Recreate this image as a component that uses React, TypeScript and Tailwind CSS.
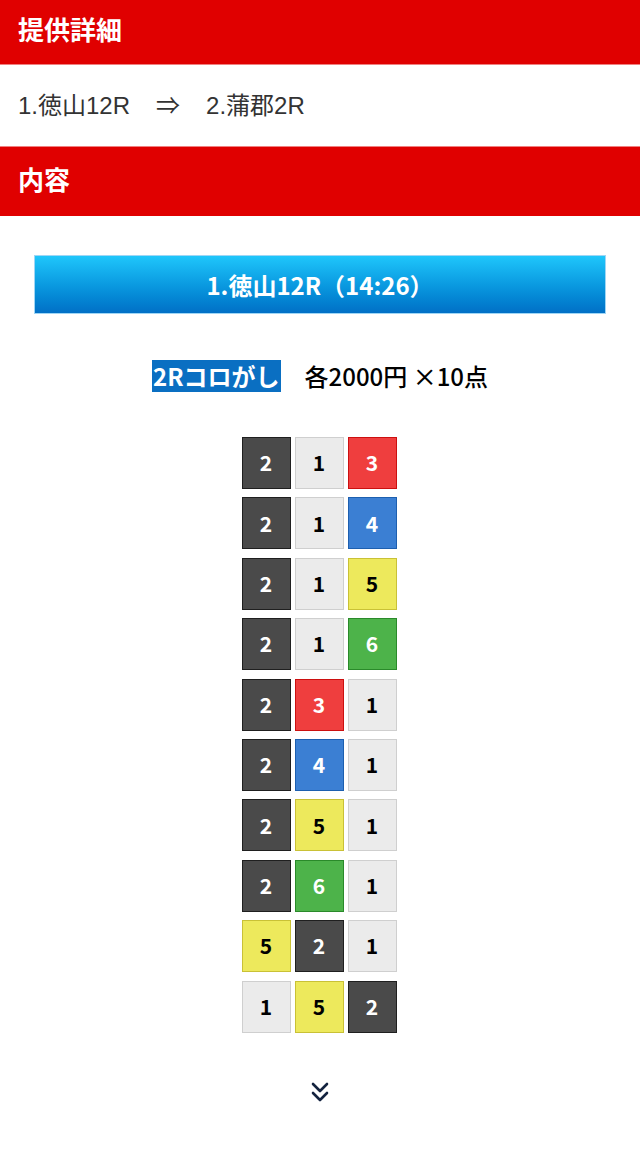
const jp = "font-['Noto_Sans_CJK_JP','Noto_Sans',sans-serif]";

type Color = "k" | "w" | "r" | "b" | "y" | "g";

const cellStyles: Record<Color, string> = {
  k: "bg-[#4a4a4a] border-[#1f1f1f] text-white",
  w: "bg-[#ebebeb] border-[#cfcfcf] text-black",
  r: "bg-[#ef3e3e] border-[#cc1010] text-white",
  b: "bg-[#3b7fd3] border-[#1d5faf] text-white",
  y: "bg-[#ede95c] border-[#c9c136] text-black",
  g: "bg-[#4db34a] border-[#2a8a2a] text-white",
};

const colorOf: Record<number, Color> = { 1: "w", 2: "k", 3: "r", 4: "b", 5: "y", 6: "g" };

const combos: number[][] = [
  [2, 1, 3],
  [2, 1, 4],
  [2, 1, 5],
  [2, 1, 6],
  [2, 3, 1],
  [2, 4, 1],
  [2, 5, 1],
  [2, 6, 1],
  [5, 2, 1],
  [1, 5, 2],
];

function Cell({ n }: { n: number }) {
  return (
    <div
      className={[
        "w-[49px] h-[52px] border flex items-center justify-center text-[21px] font-bold",
        cellStyles[colorOf[n]],
      ].join(" ")}
    >
      {n}
    </div>
  );
}

export default function App() {
  return (
    <div className={`w-[640px] min-h-[1159px] bg-white ${jp}`}>
      <div className="h-[65px] bg-[#e00000] flex items-center px-[18px] border-b border-[#f08080]">
        <h2 className="text-white text-[26px] font-bold leading-none -mt-[6px]">提供詳細</h2>
      </div>
      <div className="h-[81px] flex items-center px-[18px] text-[24px] text-[#333] font-['Liberation_Sans','Noto_Sans_CJK_JP',sans-serif]">
        <span>1.徳山12R</span>
        <span className="ml-[26px]">⇒</span>
        <span className="ml-[26px]">2.蒲郡2R</span>
      </div>
      <div className="h-[70px] bg-[#e00000] flex items-center px-[18px] border-t border-[#f08080]">
        <h2 className="text-white text-[26px] font-bold leading-none -mt-[6px]">内容</h2>
      </div>

      <div className="px-[34px] pt-[39px]">
        <div className="h-[59px] flex items-center justify-center bg-gradient-to-b from-[#1fc6fb] to-[#0270c6] border border-[#9fd6f5] text-white text-[24px] font-bold">
          1.徳山12R（14:26）
        </div>
      </div>

      <div className="flex justify-center items-center mt-[44px] text-[24px] leading-[36px]">
        <span className="bg-[#0a6fc2] text-white font-bold px-[1px] h-[32px] flex items-center">2Rコロがし</span>
        <span className="ml-[24px] font-medium text-black">各2000円 ×10点</span>
      </div>

      <div className="flex flex-col items-center gap-[8.4px] mt-[43px] -ml-[2px]">
        {combos.map((row, i) => (
          <div key={i} className="flex gap-[4px]">
            {row.map((n, j) => (
              <Cell key={j} n={n} />
            ))}
          </div>
        ))}
      </div>

      <div className="flex justify-center mt-[46px]">
        <svg width="24" height="26" viewBox="0 0 24 26" fill="none" stroke="#14233f" strokeWidth="2.6" strokeLinecap="round" strokeLinejoin="round">
          <path d="M5 5l7 7 7-7" />
          <path d="M5 14l7 7 7-7" />
        </svg>
      </div>
    </div>
  );
}
